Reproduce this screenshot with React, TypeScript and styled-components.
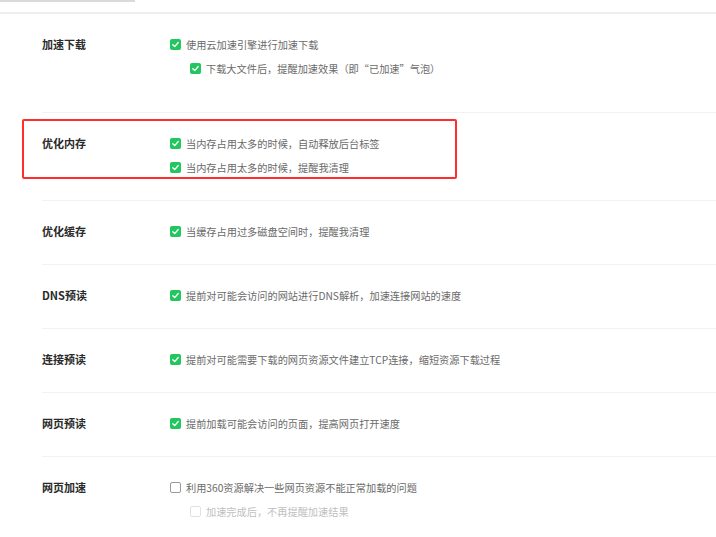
import React from 'react';
import styled, { createGlobalStyle } from 'styled-components';

const GlobalStyle = createGlobalStyle`
  html, body {
    margin: 0;
    padding: 0;
    background: #ffffff;
  }
  body {
    font-family: "Noto Sans CJK SC", "Noto Sans", sans-serif;
  }
`;

const Page = styled.div`
  width: 716px;
  min-height: 537px;
  background: #fff;
`;

const Header = styled.div`
  height: 12px;
  border-bottom: 2px solid #efefef;
`;

const TabMark = styled.div`
  width: 135px;
  height: 2px;
  background: #dadada;
`;

const List = styled.div`
  margin-left: 42px;
`;

interface SectionProps {
  first?: boolean;
}

const Section = styled.section<SectionProps>`
  position: relative;
  display: flex;
  align-items: flex-start;
  padding: ${p => (p.first ? '18px 0 32px' : '18px 0 21px')};
  border-top: ${p => (p.first ? 'none' : '1px solid #f2f2f2')};
`;

const Label = styled.div`
  width: 128px;
  flex-shrink: 0;
  font-size: 11px;
  line-height: 24px;
  font-weight: 700;
  color: #2a2a2a;
`;

const Options = styled.div`
  display: flex;
  flex-direction: column;
`;

interface OptionProps {
  sub?: boolean;
  disabled?: boolean;
}

const Option = styled.label<OptionProps>`
  display: flex;
  align-items: center;
  gap: 5px;
  height: 24px;
  padding-left: ${p => (p.sub ? '20px' : '0')};
  font-size: 10.2px;
  color: ${p => (p.disabled ? '#c0c0c0' : '#6a6a6a')};
  white-space: nowrap;
`;

interface BoxProps {
  checked?: boolean;
  disabled?: boolean;
}

const Box = styled.span<BoxProps>`
  width: 11px;
  height: 11px;
  box-sizing: border-box;
  border-radius: 2px;
  flex-shrink: 0;
  display: flex;
  align-items: center;
  justify-content: center;
  background: ${p => (p.checked ? '#22c55e' : '#fff')};
  border: ${p =>
    p.checked ? 'none' : p.disabled ? '1px solid #e2e2e2' : '1px solid #9a9a9a'};
`;

const Highlight = styled.div`
  position: absolute;
  top: 6px;
  left: -20px;
  width: 435px;
  height: 60px;
  box-sizing: border-box;
  border: 2px solid #ff2d2d;
  border-radius: 2px;
  pointer-events: none;
`;

type Opt = { text: string; checked: boolean; sub?: boolean; disabled?: boolean };
type Group = { label: string; options: Opt[]; highlight?: boolean };

const groups: Group[] = [
  {
    label: '加速下载',
    options: [
      { text: '使用云加速引擎进行加速下载', checked: true },
      { text: '下载大文件后，提醒加速效果（即“已加速”气泡）', checked: true, sub: true },
    ],
  },
  {
    label: '优化内存',
    highlight: true,
    options: [
      { text: '当内存占用太多的时候，自动释放后台标签', checked: true },
      { text: '当内存占用太多的时候，提醒我清理', checked: true },
    ],
  },
  {
    label: '优化缓存',
    options: [{ text: '当缓存占用过多磁盘空间时，提醒我清理', checked: true }],
  },
  {
    label: 'DNS预读',
    options: [{ text: '提前对可能会访问的网站进行DNS解析，加速连接网站的速度', checked: true }],
  },
  {
    label: '连接预读',
    options: [
      { text: '提前对可能需要下载的网页资源文件建立TCP连接，缩短资源下载过程', checked: true },
    ],
  },
  {
    label: '网页预读',
    options: [{ text: '提前加载可能会访问的页面，提高网页打开速度', checked: true }],
  },
  {
    label: '网页加速',
    options: [
      { text: '利用360资源解决一些网页资源不能正常加载的问题', checked: false },
      { text: '加速完成后，不再提醒加速结果', checked: false, sub: true, disabled: true },
    ],
  },
];

const Check: React.FC = () => (
  <svg width="9" height="9" viewBox="0 0 10 10">
    <polyline
      points="2,5.2 4.2,7.3 8,2.8"
      fill="none"
      stroke="#fff"
      strokeWidth="1.5"
      strokeLinecap="round"
      strokeLinejoin="round"
    />
  </svg>
);

const App: React.FC = () => {
  return (
    <Page>
      <GlobalStyle />
      <Header>
        <TabMark />
      </Header>
      <List>
        {groups.map((g, i) => (
          <Section key={g.label} first={i === 0}>
            {g.highlight && <Highlight />}
            <Label>{g.label}</Label>
            <Options>
              {g.options.map(o => (
                <Option key={o.text} sub={o.sub} disabled={o.disabled}>
                  <Box checked={o.checked} disabled={o.disabled}>
                    {o.checked && <Check />}
                  </Box>
                  {o.text}
                </Option>
              ))}
            </Options>
          </Section>
        ))}
      </List>
    </Page>
  );
};

export default App;
